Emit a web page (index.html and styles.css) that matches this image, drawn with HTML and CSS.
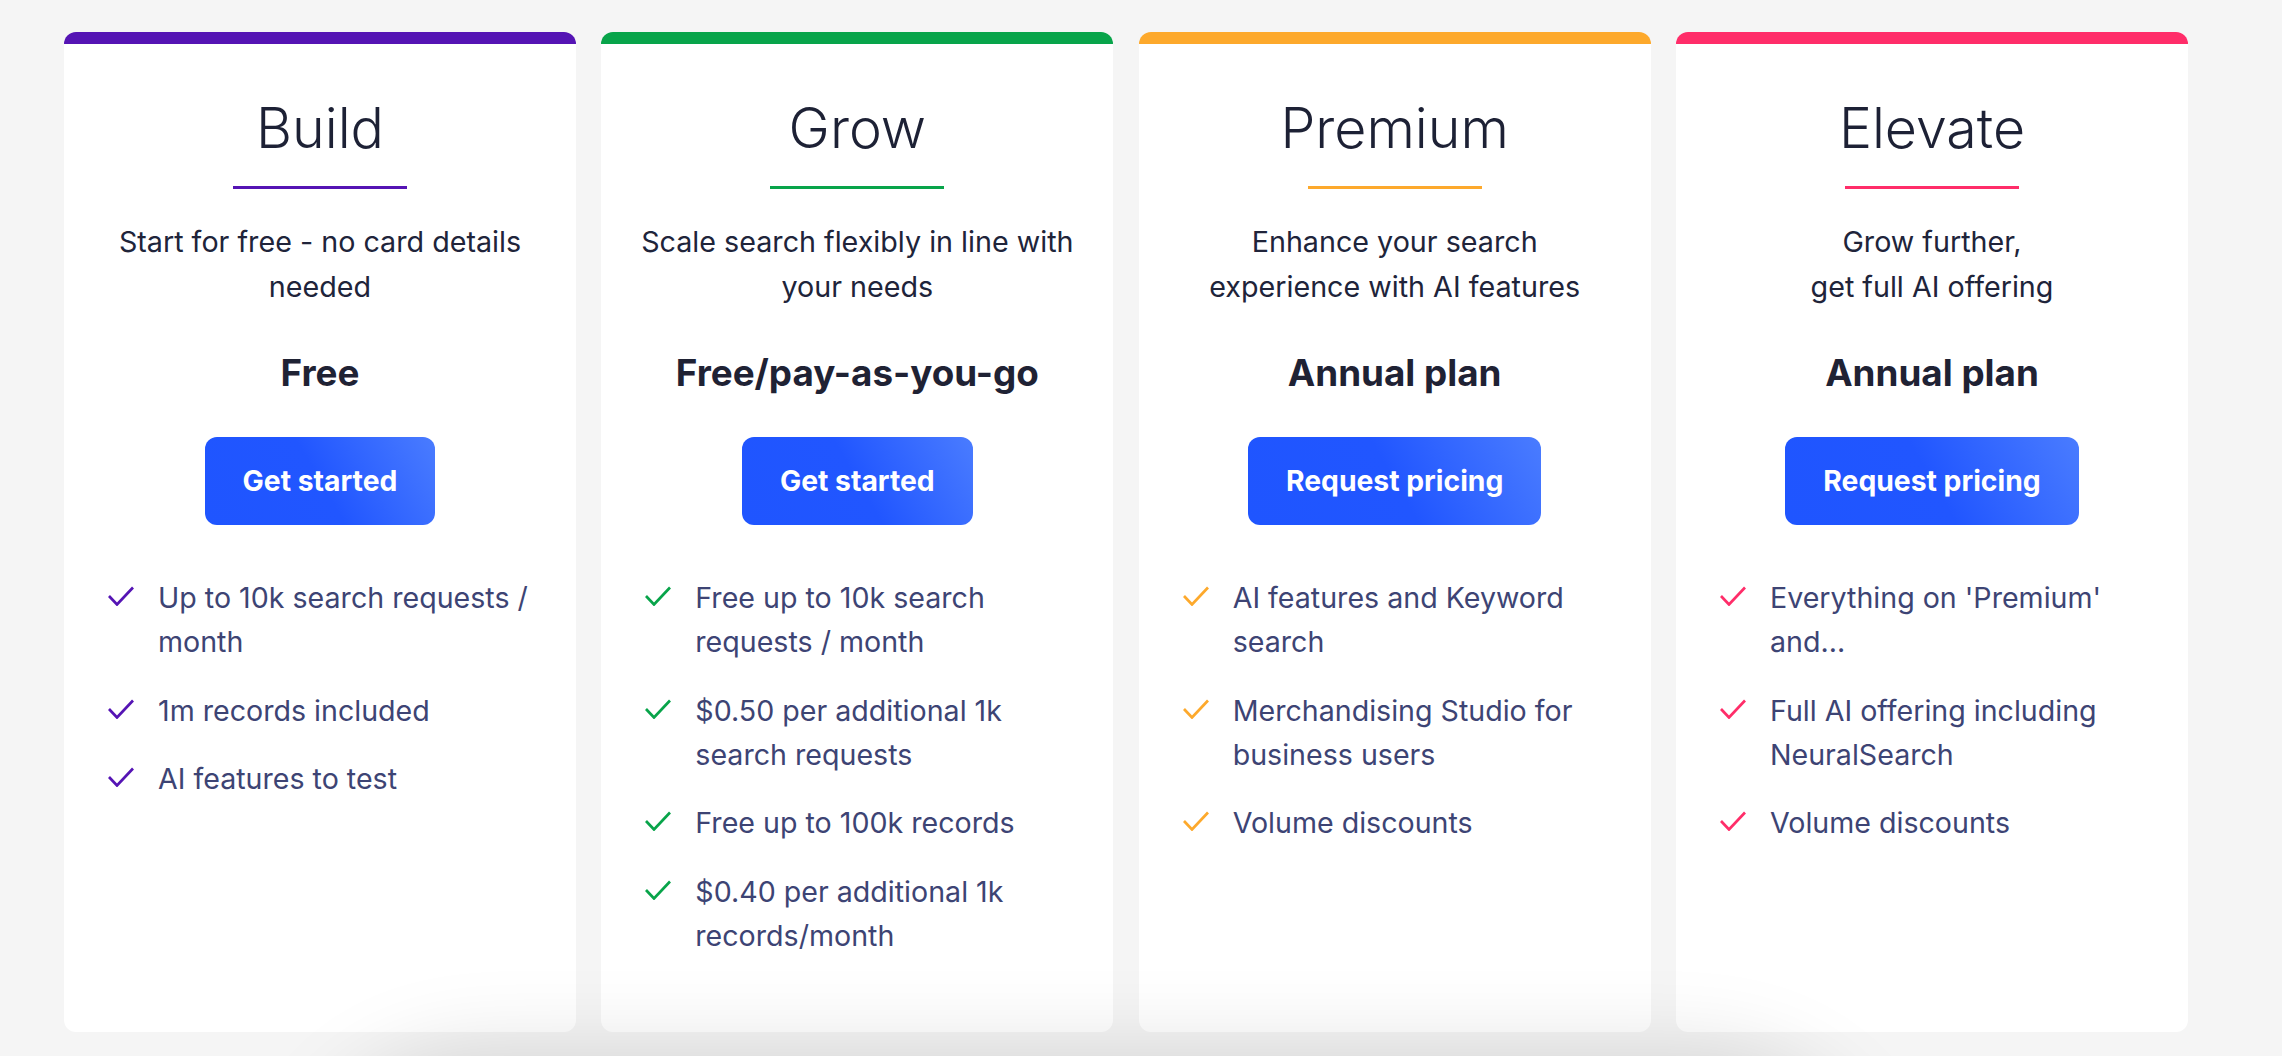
FILE: index.html
```html
<!DOCTYPE html>
<html lang="en">
<head>
<meta charset="utf-8">
<title>Pricing plans</title>
<link rel="stylesheet" href="styles.css">
</head>
<body>
<main class="page">
  <section class="plans">
    <article class="plan plan--build">
      <h2 class="plan-name">Build</h2>
      <div class="plan-rule"></div>
      <p class="plan-desc">Start for free - no card details needed</p>
      <p class="plan-price">Free</p>
      <a class="plan-btn" href="#">Get started</a>
      <ul class="features">
        <li><svg class="check" viewBox="0 0 26 20"><polyline points="1,10 9,18.5 25,1.5"/></svg><span>Up to 10k search requests / month</span></li>
        <li><svg class="check" viewBox="0 0 26 20"><polyline points="1,10 9,18.5 25,1.5"/></svg><span>1m records included</span></li>
        <li><svg class="check" viewBox="0 0 26 20"><polyline points="1,10 9,18.5 25,1.5"/></svg><span>AI features to test</span></li>
      </ul>
    </article>
    <article class="plan plan--grow">
      <h2 class="plan-name">Grow</h2>
      <div class="plan-rule"></div>
      <p class="plan-desc">Scale search flexibly in line with your needs</p>
      <p class="plan-price">Free/pay-as-you-go</p>
      <a class="plan-btn" href="#">Get started</a>
      <ul class="features">
        <li><svg class="check" viewBox="0 0 26 20"><polyline points="1,10 9,18.5 25,1.5"/></svg><span>Free up to 10k search requests / month</span></li>
        <li><svg class="check" viewBox="0 0 26 20"><polyline points="1,10 9,18.5 25,1.5"/></svg><span>$0.50 per additional 1k search requests</span></li>
        <li><svg class="check" viewBox="0 0 26 20"><polyline points="1,10 9,18.5 25,1.5"/></svg><span>Free up to 100k records</span></li>
        <li><svg class="check" viewBox="0 0 26 20"><polyline points="1,10 9,18.5 25,1.5"/></svg><span>$0.40 per additional 1k records/month</span></li>
      </ul>
    </article>
    <article class="plan plan--premium">
      <h2 class="plan-name">Premium</h2>
      <div class="plan-rule"></div>
      <p class="plan-desc">Enhance your search<br>experience with AI features</p>
      <p class="plan-price">Annual plan</p>
      <a class="plan-btn" href="#">Request pricing</a>
      <ul class="features">
        <li><svg class="check" viewBox="0 0 26 20"><polyline points="1,10 9,18.5 25,1.5"/></svg><span>AI features and Keyword search</span></li>
        <li><svg class="check" viewBox="0 0 26 20"><polyline points="1,10 9,18.5 25,1.5"/></svg><span>Merchandising Studio for business users</span></li>
        <li><svg class="check" viewBox="0 0 26 20"><polyline points="1,10 9,18.5 25,1.5"/></svg><span>Volume discounts</span></li>
      </ul>
    </article>
    <article class="plan plan--elevate">
      <h2 class="plan-name">Elevate</h2>
      <div class="plan-rule"></div>
      <p class="plan-desc">Grow further,<br>get full AI offering</p>
      <p class="plan-price">Annual plan</p>
      <a class="plan-btn" href="#">Request pricing</a>
      <ul class="features">
        <li><svg class="check" viewBox="0 0 26 20"><polyline points="1,10 9,18.5 25,1.5"/></svg><span>Everything on 'Premium' and...</span></li>
        <li><svg class="check" viewBox="0 0 26 20"><polyline points="1,10 9,18.5 25,1.5"/></svg><span>Full AI offering including NeuralSearch</span></li>
        <li><svg class="check" viewBox="0 0 26 20"><polyline points="1,10 9,18.5 25,1.5"/></svg><span>Volume discounts</span></li>
      </ul>
    </article>
  </section>
  <div class="below-shadow"></div>
</main>
</body>
</html>
```

FILE: styles.css
```css
* { box-sizing: border-box; }

html, body {
  margin: 0;
  height: 1056px;
  overflow: hidden;
  background: #f5f5f5;
}

body {
  font-family: Inter, "Noto Sans", sans-serif;
  color: #1e2236;
}

.page {
  position: relative;
  height: 1056px;
  padding: 32px 94px 0 64px;
}

.plans {
  display: grid;
  grid-template-columns: repeat(4, 512px);
  column-gap: 25.33px;
  align-items: stretch;
}

.plan {
  background: #ffffff;
  border-top: 12px solid #5514b4;
  border-radius: 12px;
  min-height: 1000px;
  padding: 49px 40px 60px 40px;
  display: flex;
  flex-direction: column;
  align-items: center;
  text-align: center;
}

.plan--build { --accent: #5514b4; border-top-color: #5514b4; }
.plan--grow { --accent: #08a44a; border-top-color: #08a44a; }
.plan--premium { --accent: #fda92c; border-top-color: #fda92c; }
.plan--elevate { --accent: #ff2d69; border-top-color: #ff2d69; }

.plan-name {
  margin: 0;
  font-size: 55.5px;
  line-height: 70px;
  font-weight: 300;
  color: #1d2135;
}

.plan-rule {
  width: 174px;
  height: 3px;
  margin-top: 23px;
  background: var(--accent);
}

.plan-desc {
  margin: 30px 0 0;
  width: 440px;
  font-size: 28.7px;
  line-height: 45px;
  color: #20243a;
}

.plan-price {
  margin: 42px 0 0;
  font-size: 36.8px;
  line-height: 44px;
  font-weight: 700;
  color: #1f2234;
}

.plan-btn {
  margin-top: 42px;
  height: 88px;
  padding: 0 38px;
  display: flex;
  align-items: center;
  justify-content: center;
  border-radius: 12px;
  background: linear-gradient(60deg, #1f55ff 0%, #2156ff 50%, #4a7cff 100%);
  color: #ffffff;
  font-size: 28.3px;
  font-weight: 700;
  text-decoration: none;
}

.features {
  list-style: none;
  margin: 51px -12px 0 4px;
  padding: 0;
  align-self: stretch;
  text-align: left;
  display: flex;
  flex-direction: column;
  gap: 24.5px;
}

.features li {
  display: flex;
  align-items: flex-start;
  gap: 24px;
  font-size: 28.6px;
  line-height: 44px;
  color: #3d4474;
}

.check {
  flex: 0 0 26px;
  width: 26px;
  height: 20px;
  margin-top: 10px;
  fill: none;
  stroke: var(--accent);
  stroke-width: 2.7;
}

.below-shadow {
  position: absolute;
  left: 330px;
  width: 1520px;
  top: 1085px;
  height: 300px;
  border-radius: 200px;
  background: #e2e2e2;
  box-shadow: 0 0 90px 30px rgba(0, 0, 0, 0.15);
}
```
